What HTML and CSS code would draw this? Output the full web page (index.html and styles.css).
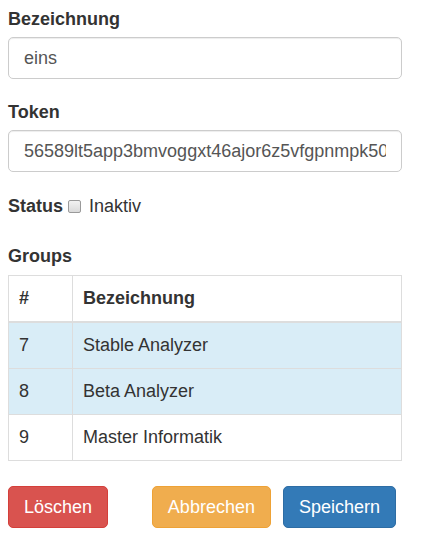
FILE: index.html
```html
<!DOCTYPE html>
<html lang="de">
<head>
<meta charset="utf-8">
<title>Token</title>
<link rel="stylesheet" href="styles.css">
</head>
<body>
<form class="form">
  <div class="form-group">
    <label class="control-label">Bezeichnung</label>
    <input class="form-control" type="text" value="eins">
  </div>
  <div class="form-group">
    <label class="control-label">Token</label>
    <input class="form-control" type="text" value="56589lt5app3bmvoggxt46ajor6z5vfgpnmpk50jq">
  </div>
  <div class="status-row">
    <label class="control-label">Status</label>
    <label class="check-label"><input class="check" type="checkbox"><span>Inaktiv</span></label>
  </div>
  <div class="groups">
    <label class="control-label groups-label">Groups</label>
    <table class="table">
      <thead>
        <tr><th class="col-id">#</th><th>Bezeichnung</th></tr>
      </thead>
      <tbody>
        <tr class="info"><td>7</td><td>Stable Analyzer</td></tr>
        <tr class="info"><td>8</td><td>Beta Analyzer</td></tr>
        <tr><td>9</td><td>Master Informatik</td></tr>
      </tbody>
    </table>
  </div>
  <div class="actions">
    <button type="button" class="btn btn-danger">Löschen</button>
    <div class="actions-right">
      <button type="button" class="btn btn-warning">Abbrechen</button>
      <button type="button" class="btn btn-primary">Speichern</button>
    </div>
  </div>
</form>
</body>
</html>
```

FILE: styles.css
```css
html, body {
  margin: 0;
  padding: 0;
  background: #fff;
}
body {
  font-family: "Liberation Sans", Arial, Helvetica, sans-serif;
  font-size: 18px;
  line-height: 27px;
  color: #333;
  padding: 6px 19px 0 8px;
}
.form {
  display: flex;
  flex-direction: column;
}
.form-group {
  display: flex;
  flex-direction: column;
  margin-bottom: 20px;
}
.control-label {
  display: block;
  font-weight: bold;
  line-height: 26px;
  margin-bottom: 5px;
}
.form-control {
  box-sizing: border-box;
  width: 100%;
  height: 42px;
  margin: 0;
  padding: 6px 15px;
  font-family: inherit;
  font-size: 18px;
  line-height: 27px;
  color: #555;
  background: #fff;
  border: 1px solid #ccc;
  border-radius: 5px;
  box-shadow: inset 0 1px 1px rgba(0,0,0,0.075);
  outline: none;
}
.status-row {
  display: flex;
  align-items: baseline;
  margin-top: 1px;
  margin-bottom: 24px;
  line-height: 26px;
}
.status-row .control-label {
  margin-bottom: 0;
}
.check-label {
  display: inline-flex;
  align-items: baseline;
  margin-left: 5px;
}
.check {
  -webkit-appearance: none;
  appearance: none;
  box-sizing: border-box;
  width: 13px;
  height: 13px;
  margin: 0 8px 0 0;
  border: 1px solid #9a9a9a;
  border-radius: 2px;
  background: linear-gradient(#f2f2f2, #dadada);
  position: relative;
  top: 1px;
}
.groups-label {
  margin-bottom: 6px;
}
.table {
  width: 100%;
  border-collapse: collapse;
  border-spacing: 0;
  border: 1px solid #ddd;
  margin-bottom: 25px;
}
.table th,
.table td {
  text-align: left;
  padding: 9px 10px;
  line-height: 27px;
  border: 1px solid #ddd;
  vertical-align: top;
}
.table thead th {
  font-weight: bold;
  border-bottom-width: 2px;
}
.table .col-id {
  width: 43px;
}
.table tr.info td {
  background: #d9edf7;
}
.actions {
  display: flex;
  justify-content: space-between;
  align-items: center;
  padding-right: 6px;
}
.actions-right {
  display: flex;
  gap: 12px;
}
.btn {
  box-sizing: border-box;
  height: 42px;
  margin: 0;
  padding: 6px 15px;
  font-family: inherit;
  font-size: 18px;
  line-height: 27px;
  color: #fff;
  border: 1px solid transparent;
  border-radius: 5px;
  cursor: pointer;
}
.btn-danger {
  background: #d9534f;
  border-color: #d43f3a;
}
.btn-warning {
  background: #f0ad4e;
  border-color: #eea236;
}
.btn-primary {
  background: #337ab7;
  border-color: #2e6da4;
}
```
